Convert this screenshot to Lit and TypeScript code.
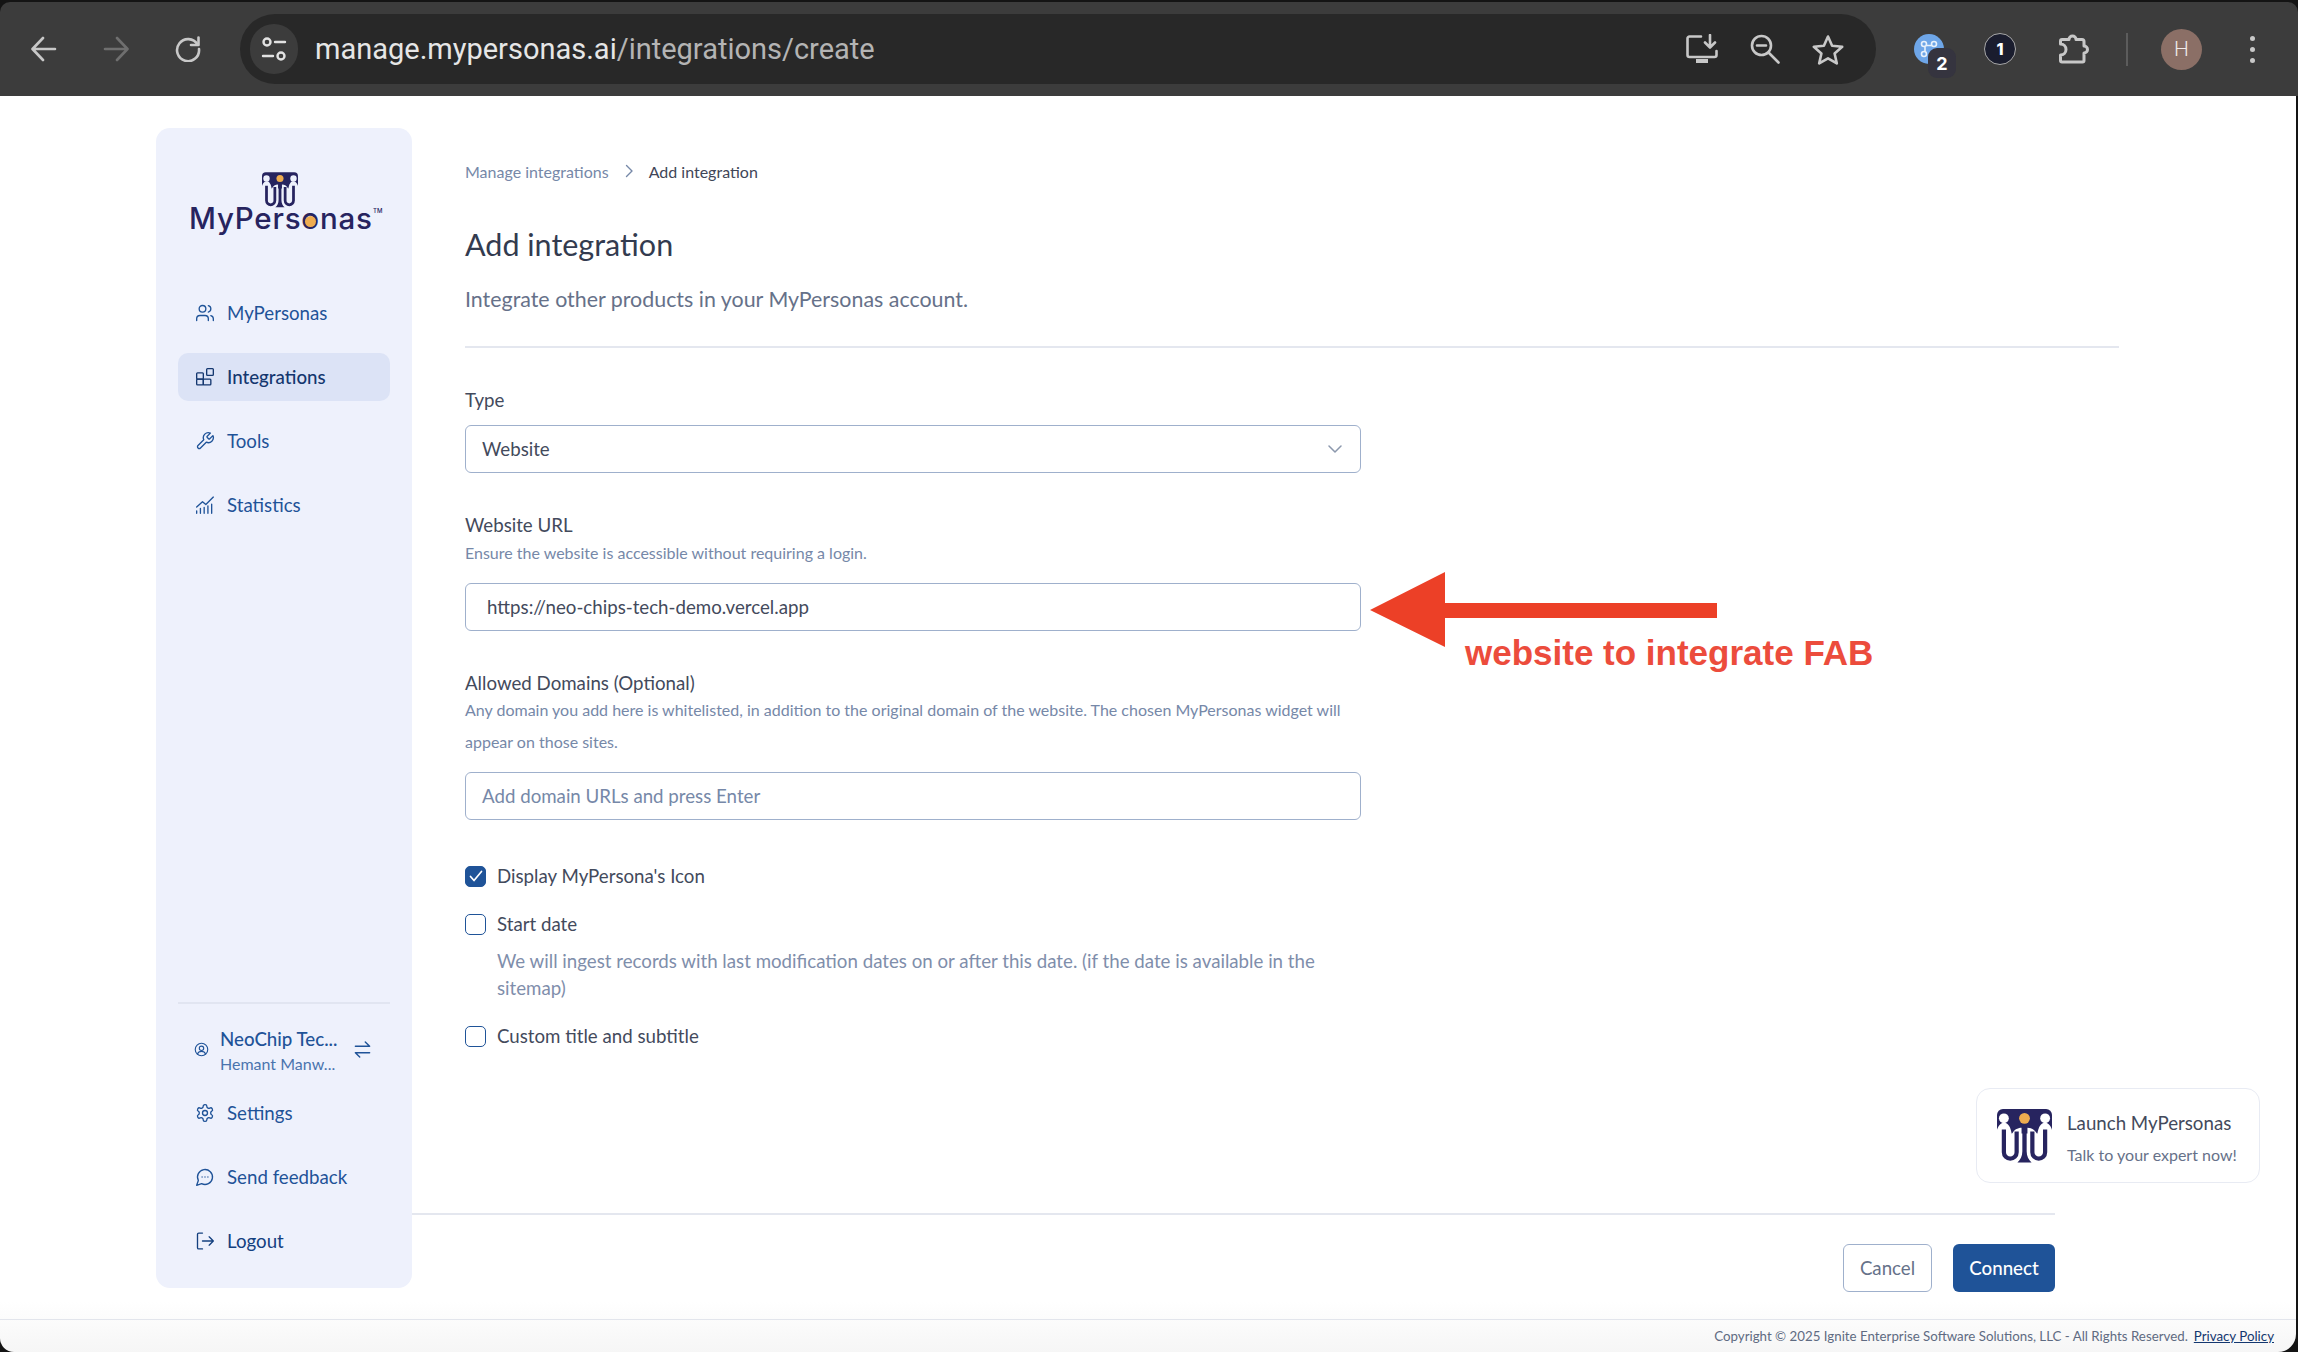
import { LitElement, html, css, svg } from "lit";
import { customElement } from "lit/decorators.js";

const s = (size: number, body: unknown, sw = 1.6) => html`<svg width=${size} height=${size} viewBox="0 0 24 24" fill="none" stroke="currentColor" stroke-width=${sw} stroke-linecap="round" stroke-linejoin="round">${body}</svg>`;

const icons = {
  users: svg`<path d="M16 21v-2a4 4 0 0 0-4-4H6a4 4 0 0 0-4 4v2"/><circle cx="9" cy="7" r="4"/><path d="M22 21v-2a4 4 0 0 0-3-3.87"/><path d="M16 3.13a4 4 0 0 1 0 7.75"/>`,
  grid: svg`<rect x="2" y="7" width="8" height="7.5" rx="1"/><rect x="2" y="14.5" width="8" height="7" rx="1"/><rect x="10" y="14.5" width="9" height="7" rx="1"/><rect x="14" y="2" width="8" height="8" rx="1"/>`,
  wrench: svg`<path d="M14.7 6.300a1 1 0 0 0 0 1.400l1.600 1.600a1 1 0 0 0 1.400 0l3.770-3.770a6 6 0 0 1-7.940 7.940l-6.910 6.910a2.120 2.120 0 0 1-3-3l6.910-6.910a6 6 0 0 1 7.940-7.940l-3.760 3.760z"/>`,
  chart: svg`<path d="M2 22v-3M6.500 22v-6M11 22v-7M15.500 22v-9M20 22V11"/><path d="M2 14.500 9 8l4 3.500L22 2.500"/>`,
  gear: svg`<path d="M12.220 2h-.44a2 2 0 0 0-2 2v.18a2 2 0 0 1-1 1.730l-.43.25a2 2 0 0 1-2 0l-.15-.08a2 2 0 0 0-2.730.73l-.22.38a2 2 0 0 0 .73 2.730l.15.1a2 2 0 0 1 1 1.720v.51a2 2 0 0 1-1 1.740l-.15.09a2 2 0 0 0-.73 2.730l.22.38a2 2 0 0 0 2.730.73l.15-.08a2 2 0 0 1 2 0l.43.25a2 2 0 0 1 1 1.730V20a2 2 0 0 0 2 2h.44a2 2 0 0 0 2-2v-.18a2 2 0 0 1 1-1.730l.43-.25a2 2 0 0 1 2 0l.15.08a2 2 0 0 0 2.730-.73l.22-.39a2 2 0 0 0-.73-2.730l-.15-.08a2 2 0 0 1-1-1.740v-.5a2 2 0 0 1 1-1.740l.15-.09a2 2 0 0 0 .73-2.730l-.22-.38a2 2 0 0 0-2.730-.73l-.15.08a2 2 0 0 1-2 0l-.43-.25a2 2 0 0 1-1-1.730V4a2 2 0 0 0-2-2z"/><circle cx="12" cy="12" r="3"/>`,
  chat: svg`<path d="M7.900 20A9 9 0 1 0 4 16.100L2 22Z"/><path d="M8.500 12h.01M12 12h.01M15.500 12h.01"/>`,
  logout: svg`<path d="M9 2.500H4.500a1.500 1.500 0 0 0-1.500 1.500v16a1.500 1.500 0 0 0 1.500 1.500H9"/><path d="M9 12h13M17 7l5 5-5 5"/>`,
  user: svg`<circle cx="12" cy="12" r="10"/><circle cx="12" cy="10" r="3.500"/><path d="M5.500 19.500c1-3 3.500-4.500 6.500-4.500s5.500 1.500 6.500 4.500"/>`,
  swap: svg`<path d="M3 8h18M15.500 2.500 21 8M3 16h18M3 16l5.500 5.500"/>`,
};

const mark = (w: number, h: number, bg: string) => html`<svg width=${w} height=${h} viewBox="7 5 56 55">
  <path d="M7 30V11a6 6 0 0 1 6-6h44a6 6 0 0 1 6 6v19z" fill="#27245f"/>
  <path d="M6 31c1-9 5-12 8.500-12s6.500 4 7.500 12z" fill=${bg}/>
  <path d="M64 31c-1-9-5-12-8.500-12s-6.500 4-7.500 12z" fill=${bg}/>
  <path d="M22 31c2-5 6-7 10-7v7zM48 31c-2-5-6-7-10-7v7z" fill=${bg}/>
  <circle cx="14" cy="14.500" r="5" fill=${bg}/><circle cx="56" cy="14.500" r="5" fill=${bg}/><circle cx="35" cy="14.500" r="5.500" fill="#eeac4f"/>
  <g fill="none" stroke="#27245f" stroke-width="4.300"><path d="M14 26v23a6.500 6.500 0 0 0 13 0V28"/><path d="M56 26v23a6.500 6.500 0 0 1-13 0V28"/></g>
  <path d="M32.800 24h4.400v24c0 5 2 8.500 5 11.500H27.800c3-3 5-6.500 5-11.500z" fill="#27245f"/>
</svg>`;

@customElement("app-root")
export class AppRoot extends LitElement {
  static styles = css`
    :host { display: block; width: 2298px; height: 1352px; overflow: hidden; background: #141414; font-family: "Lato", sans-serif; color: #3f4658; position: relative; }
    * { box-sizing: border-box; }
    .toolbar { height: 94px; margin-top: 2px; background: #3c3c3c; border-radius: 10px 10px 0 0; display: flex; align-items: center; padding-left: 31px; color: #c8c8c8; }
    .toolbar svg { display: block; flex: none; }
    .nav-btn { margin-right: 46px; }
    .dim { color: #6f6f6f; }
    .omni { width: 1636px; height: 70px; margin-left: -7px; background: #282828; border-radius: 35px; display: flex; align-items: center; padding: 0 32px 0 10px; }
    .pill { width: 48px; height: 50px; border-radius: 25px; background: #3c3c3c; display: flex; align-items: center; justify-content: center; flex: none; }
    .url { margin-left: 17px; font: 400 29px "Roboto", sans-serif; color: #e6e6e6; flex: 1; white-space: nowrap; }
    .url span { color: #b4b4b4; }
    .omni-icons { display: flex; gap: 32px; align-items: center; }
    .ext { position: relative; width: 30px; height: 30px; margin-left: 38px; border-radius: 50%; background: #6ea6e8; flex: none; }
    .ext-badge { position: absolute; left: 14px; top: 14px; width: 28px; height: 30px; border-radius: 9px; background: #35343f; color: #fff; font: 700 18px "Inter", sans-serif; display: flex; align-items: center; justify-content: center; }
    .one { width: 32px; height: 32px; margin-left: 40px; border-radius: 50%; background: #1a1d2e; border: 1.500px solid #a8a8a8; color: #fff; font: 800 16px "Inter", sans-serif; display: flex; align-items: center; justify-content: center; flex: none; }
    .puzzle { margin-left: 42px; }
    .sep { width: 2px; height: 33px; background: #5c5c5c; margin-left: 36px; flex: none; }
    .avatar { width: 41px; height: 41px; margin-left: 33px; border-radius: 50%; background: #8b6f66; color: #f0eaea; font: 300 21px "Roboto", sans-serif; display: flex; align-items: center; justify-content: center; flex: none; }
    .dots { margin-left: 48px; display: flex; flex-direction: column; gap: 6px; }
    .dots i { width: 5px; height: 5px; border-radius: 50%; background: #c8c8c8; display: block; }

    .page { width: 2296px; height: 1256px; background: linear-gradient(to bottom, #fff 96%, #f6f6f6); border-radius: 0 0 18px 14px; display: flex; flex-direction: column; overflow: hidden; }
    .row { flex: 1; display: flex; min-height: 0; }
    .side { width: 256px; margin: 32px 0 31px 156px; background: #eef1fc; border-radius: 14px; display: flex; flex-direction: column; padding: 0 22px 23px; flex: none; }
    .logo { height: 161px; margin: 0 -22px; padding-left: 34px; padding-top: 42px; flex: none; }
    .logo-box { position: relative; width: 190px; height: 70px; }
    .logo-mark { position: absolute; left: 72px; top: 2px; }
    .word { position: absolute; left: -1px; top: 28px; font: 500 29.500px "Inter", sans-serif; letter-spacing: 0.8px; color: #27245f; line-height: 40px; white-space: nowrap; }
    .tm { position: absolute; left: 183px; top: 37px; font: 500 6px "Inter", sans-serif; color: #27245f; }
    .o-dot { position: absolute; left: 115px; top: 46px; width: 11px; height: 11px; border-radius: 50%; background: #eeac4f; }
    .item { height: 48px; display: flex; align-items: center; padding-left: 17px; gap: 12px; border-radius: 10px; color: #1f5398; font-size: 18.700px; margin-bottom: 16px; flex: none; }
    .item svg { display: block; flex: none; }
    .item.active { background: #dce3f6; color: #14376f; font-weight: 500; }
    .item.logout { color: #14407f; margin-bottom: 0; }
    .spacer { flex: 1; }
    .rule { height: 2px; background: #e1e5f1; flex: none; }
    .user { height: 85px; display: flex; align-items: center; padding: 6px 0 0 16px; color: #1f5398; flex: none; }
    .user-text { margin: 4px 0 0 11px; width: 133px; }
    .user-name { font-size: 18.700px; line-height: 24px; white-space: nowrap; font-weight: 500; }
    .user-sub { font-size: 16px; line-height: 26px; color: #4a74ae; white-space: nowrap; }

    .main { flex: 1; display: flex; flex-direction: column; min-width: 0; }
    .content { flex: 1; padding: 63px 177px 0 53px; min-height: 0; }
    .crumbs { display: flex; align-items: center; height: 24px; font-size: 16px; gap: 15px; }
    .crumbs .link { color: #7688a8; }
    .crumbs .cur { color: #3f4658; }
    .crumbs svg { color: #7688a8; display: block; }
    h1 { margin: 39px 0 0; font-size: 30.500px; line-height: 44px; font-weight: 400; color: #333b4f; }
    .lead { margin-top: 18px; font-size: 21.400px; line-height: 30px; color: #667189; }
    .hr { height: 2px; background: #e4e7ef; margin-top: 32px; }
    .form { width: 896px; margin-top: 40px; }
    .label { font-size: 18.700px; line-height: 24px; color: #434a5c; }
    .hint { font-size: 16px; line-height: 20px; color: #7688a8; margin-top: 6px; }
    .hint.tall { line-height: 32px; margin-top: -1px; }
    .box { height: 48px; border: 1.500px solid #9fb0cc; border-radius: 6px; display: flex; align-items: center; justify-content: space-between; font-size: 18.700px; color: #434a5c; background: #fff; }
    .box svg { display: block; }
    .select { margin-top: 13px; padding: 0 18px 0 16px; margin-bottom: 40px; }
    .select svg { color: #8c98ad; }
    .url-in { margin-top: 20px; padding-left: 21px; margin-bottom: 40px; }
    .dom-in { margin-top: 14px; padding-left: 16px; color: #7688a8; margin-bottom: 40px; }
    .check { display: flex; align-items: center; gap: 11px; height: 32px; font-size: 18.700px; color: #434a5c; }
    .cb { width: 21px; height: 21px; border: 1.500px solid #1f5398; border-radius: 5px; background: #fff; display: flex; align-items: center; justify-content: center; flex: none; }
    .cb.on { background: #1f5398; }
    .desc { margin: 8px 0 18px 32px; font-size: 18.700px; line-height: 27px; color: #7f8eab; }
    .gap16 { margin-bottom: 16px; }
    .actions { height: 106px; margin-right: 241px; border-top: 2px solid #e4e7ef; padding-top: 29px; display: flex; justify-content: flex-end; gap: 21px; flex: none; }
    .btn { height: 48px; border-radius: 6px; display: flex; align-items: center; justify-content: center; font-size: 18.700px; }
    .cancel { width: 89px; border: 1.500px solid #9fb0cc; color: #667189; background: #fff; }
    .connect { width: 102px; background: #1f5398; color: #fff; font-weight: 500; }
    .footer { height: 33px; border-top: 1.500px solid #e2e5ec; display: flex; justify-content: flex-end; align-items: center; padding-right: 22px; font-size: 13.300px; color: #5f6b82; white-space: nowrap; gap: 6px; flex: none; }
    .footer a { color: #14376f; text-decoration: underline; }

    .fab { position: absolute; left: 1976px; top: 1088px; width: 284px; height: 95px; background: #fff; border: 1.500px solid #e8ebf3; border-radius: 14px; display: flex; align-items: center; padding-left: 20px; }
    .fab svg { display: block; flex: none; }
    .fab-text { margin: 6px 0 0 15px; }
    .fab-title { font-size: 18.700px; line-height: 24px; color: #434a5c; }
    .fab-sub { margin-top: 9px; font-size: 16px; line-height: 22px; color: #667189; white-space: nowrap; }

    .arrow { position: absolute; left: 1370px; top: 572px; display: block; }
    .note { position: absolute; left: 1465px; top: 632px; font: 700 35px/42px "Liberation Sans", sans-serif; color: #ec4c3c; white-space: nowrap; }
  `;

  private nav(icon: unknown, label: string, cls = "") {
    return html`<div class="item ${cls}">${s(20, icon)}<span>${label}</span></div>`;
  }

  render() {
    return html`
      <div class="toolbar">
        <svg class="nav-btn" width="26" height="26" viewBox="0 0 26 26" fill="none" stroke="currentColor" stroke-width="2.600" stroke-linecap="round" stroke-linejoin="round"><path d="M24 13H2M12 2 1.500 13 12 24"/></svg>
        <svg class="nav-btn dim" width="26" height="26" viewBox="0 0 26 26" fill="none" stroke="currentColor" stroke-width="2.600" stroke-linecap="round" stroke-linejoin="round"><path d="M2 13h22M14 2l10.500 11L14 24"/></svg>
        <svg class="nav-btn" width="26" height="26" viewBox="0 0 26 26" fill="none" stroke="currentColor" stroke-width="2.600" stroke-linecap="round" stroke-linejoin="round"><path d="M22.500 8.500A11 11 0 1 0 24 13"/><path d="M23.500 1.500v7.500H16"/></svg>
        <div class="omni">
          <div class="pill"><svg width="26" height="26" viewBox="0 0 26 26" fill="none" stroke="#e2e2e2" stroke-width="2.400" stroke-linecap="round"><circle cx="6" cy="6" r="3.500"/><circle cx="20" cy="20" r="3.500"/><path d="M14 6h10M2 20h10"/></svg></div>
          <div class="url">manage.mypersonas.ai<span>/integrations/create</span></div>
          <div class="omni-icons">
            <svg width="32" height="30" viewBox="0 0 32 30" fill="none" stroke="currentColor" stroke-width="2.600" stroke-linecap="round" stroke-linejoin="round"><path d="M15 2.500H3.500a2 2 0 0 0-2 2V21a2 2 0 0 0 2 2h25a2 2 0 0 0 2-2v-4"/><path d="M10 27h12" stroke-width="4" stroke-linecap="butt"/><path d="M24 1v12M19 8.500l5 5 5-5"/></svg>
            <svg width="30" height="30" viewBox="0 0 30 30" fill="none" stroke="currentColor" stroke-width="2.600" stroke-linecap="round"><circle cx="11.500" cy="11.500" r="9.500"/><path d="M7 11.500h9M18.500 18.500 28.500 28.500"/></svg>
            <svg width="32" height="31" viewBox="0 0 32 31" fill="none" stroke="currentColor" stroke-width="2.600" stroke-linejoin="round"><path d="M16 2.500l4.100 9.300 10.100 1-7.600 6.700 2.200 9.900L16 24.300 7.200 29.400l2.200-9.900-7.600-6.700 10.100-1z"/></svg>
          </div>
        </div>
        <div class="ext">
          <svg width="30" height="30" viewBox="0 0 30 30" fill="none" stroke="#e8f1fb" stroke-width="1.600"><circle cx="10" cy="10" r="2.500"/><circle cx="20" cy="10" r="2.500"/><circle cx="10" cy="20" r="2.500"/><path d="M12.500 11.500h5M11 13v4.500"/></svg>
          <div class="ext-badge">2</div>
        </div>
        <div class="one">1</div>
        <svg class="puzzle" width="32" height="32" viewBox="0 0 32 32" fill="none" stroke="currentColor" stroke-width="3" stroke-linejoin="round"><path d="M2.500 8a1.500 1.500 0 0 1 1.500-1.500h7a3.500 3.500 0 0 1 7 0h6a2 2 0 0 1 2 2V13a3.500 3.500 0 0 1 0 7v7.500a1.500 1.500 0 0 1-1.500 1.500H4a1.500 1.500 0 0 1-1.500-1.500V22a5.500 5.500 0 0 0 0-11z"/></svg>
        <div class="sep"></div>
        <div class="avatar">H</div>
        <div class="dots"><i></i><i></i><i></i></div>
      </div>
      <div class="page">
        <div class="row">
          <aside class="side">
            <div class="logo"><div class="logo-box">
              <span class="logo-mark">${mark(36, 36, "#eef1fc")}</span>
              <span class="word">MyPersonas</span><span class="tm">TM</span><span class="o-dot"></span>
            </div></div>
            ${this.nav(icons.users, "MyPersonas")}
            ${this.nav(icons.grid, "Integrations", "active")}
            ${this.nav(icons.wrench, "Tools")}
            ${this.nav(icons.chart, "Statistics")}
            <div class="spacer"></div>
            <div class="rule"></div>
            <div class="user">
              ${s(15, icons.user, 1.800)}
              <div class="user-text"><div class="user-name">NeoChip Tec...</div><div class="user-sub">Hemant Manw...</div></div>
              ${s(19, icons.swap, 1.800)}
            </div>
            ${this.nav(icons.gear, "Settings")}
            ${this.nav(icons.chat, "Send feedback")}
            ${this.nav(icons.logout, "Logout", "logout")}
          </aside>
          <main class="main">
            <div class="content">
              <div class="crumbs"><span class="link">Manage integrations</span>
                <svg width="10" height="14" viewBox="0 0 10 14" fill="none" stroke="currentColor" stroke-width="1.400" stroke-linecap="round" stroke-linejoin="round"><path d="M2.500 1.500 8 7l-5.500 5.500"/></svg>
                <span class="cur">Add integration</span></div>
              <h1>Add integration</h1>
              <div class="lead">Integrate other products in your MyPersonas account.</div>
              <div class="hr"></div>
              <div class="form">
                <div class="label">Type</div>
                <div class="box select"><span>Website</span><svg width="14" height="8" viewBox="0 0 14 8" fill="none" stroke="currentColor" stroke-width="1.500" stroke-linecap="round" stroke-linejoin="round"><path d="M1 1l6 6 6-6"/></svg></div>
                <div class="label">Website URL</div>
                <div class="hint">Ensure the website is accessible without requiring a login.</div>
                <div class="box url-in">https://neo-chips-tech-demo.vercel.app</div>
                <div class="label">Allowed Domains (Optional)</div>
                <div class="hint tall">Any domain you add here is whitelisted, in addition to the original domain of the website. The chosen MyPersonas widget will appear on those sites.</div>
                <div class="box dom-in">Add domain URLs and press Enter</div>
                <div class="check gap16"><span class="cb on"><svg width="14" height="12" viewBox="0 0 14 12" fill="none" stroke="#fff" stroke-width="1.700" stroke-linecap="round" stroke-linejoin="round"><path d="M1.500 6.500 5 10.500 12.500 1.500"/></svg></span>Display MyPersona's Icon</div>
                <div class="check"><span class="cb"></span>Start date</div>
                <div class="desc">We will ingest records with last modification dates on or after this date. (if the date is available in the sitemap)</div>
                <div class="check"><span class="cb"></span>Custom title and subtitle</div>
              </div>
            </div>
            <div class="actions">
              <div class="btn cancel">Cancel</div>
              <div class="btn connect">Connect</div>
            </div>
          </main>
        </div>
        <div class="footer"><span>Copyright © 2025 Ignite Enterprise Software Solutions, LLC - All Rights Reserved.</span><a>Privacy Policy</a></div>
      </div>
      <div class="fab">
        ${mark(55, 54, "#ffffff")}
        <div class="fab-text"><div class="fab-title">Launch MyPersonas</div><div class="fab-sub">Talk to your expert now!</div></div>
      </div>
      <svg class="arrow" width="347" height="76" viewBox="0 0 347 76"><path d="M0 38 75 0V31H347V46H75V75z" fill="#ec4027"/></svg>
      <div class="note">website to integrate FAB</div>
    `;
  }
}
